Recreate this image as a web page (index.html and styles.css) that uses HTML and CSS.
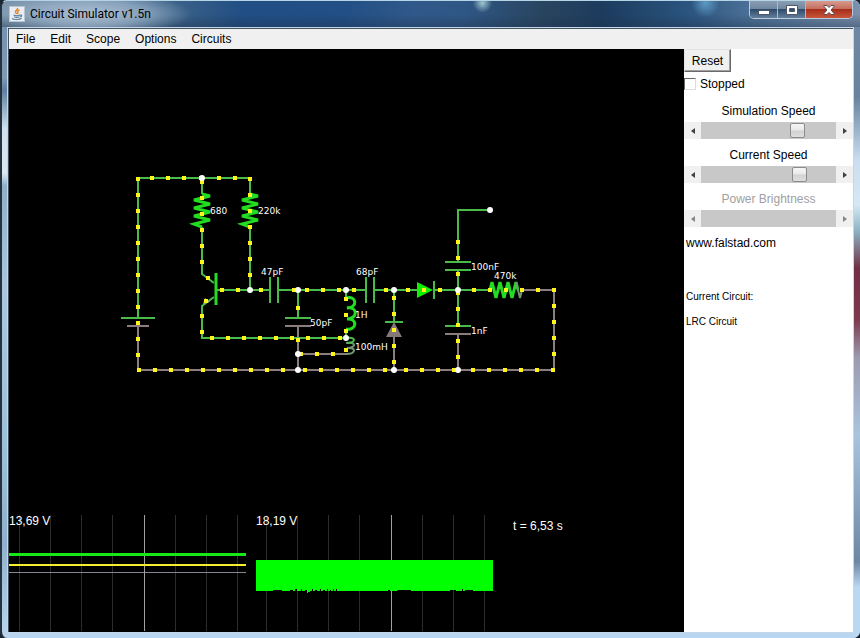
FILE: index.html
```html
<!DOCTYPE html>
<html lang="en">
<head>
<meta charset="utf-8">
<title>Circuit Simulator v1.5n</title>
<link rel="stylesheet" href="styles.css">
</head>
<body>
<div class="window">
  <header class="titlebar">
    <svg class="app-icon" viewBox="0 0 16 16" aria-hidden="true">
      <rect x=".5" y=".5" width="15" height="15" fill="#e9edf1" stroke="#b8c4cf"/>
      <path d="M8.500 2c1 1.700-3 2.500-2 4.200.3.700 1 1 1.200 1.800M10.500 4C9 4.600 8 5.400 8.800 6.300c.5.700.2 1.200-.3 1.700" fill="none" stroke="#e0872f" stroke-width="1.400"/>
      <path d="M4.500 9c1.500.700 5 .7 6.500 0M5 10.800c1.500.6 4 .6 5.500 0M3 12.500c2 1.500 7.500 1.300 9.500-.3M11 9.200c2-.6 2.300 1 .2 1.800" fill="none" stroke="#577d9b" stroke-width="1.200"/>
    </svg>
    <h1 class="title">Circuit Simulator v1.5n</h1>
    <div class="controls">
      <button class="control" aria-label="Minimize"><svg width="14" height="12" viewBox="0 0 14 12"><rect x="1.500" y="6.500" width="11" height="4" fill="#fff" stroke="#4c5865"/></svg></button>
      <button class="control" aria-label="Maximize"><svg width="14" height="12" viewBox="0 0 14 12"><path fill="#fff" fill-rule="evenodd" stroke="#4c5865" d="M1.500 1.500h11v9h-11zM4.500 4.500v3h5v-3z"/></svg></button>
      <button class="control close" aria-label="Close"><svg width="14" height="12" viewBox="0 0 14 12"><path d="M2 1.500h3l2 2 2-2h3v1L9 6l3 3.500v1H9l-2-2-2 2H2v-1L5 6 2 2.500z" fill="#fff" stroke="#5d4a50"/></svg></button>
    </div>
  </header>
  <div class="client">
    <nav class="menubar">
      <button>File</button><button>Edit</button><button>Scope</button><button>Options</button><button>Circuits</button>
    </nav>
    <div class="workspace">
      <main class="canvas">
        <svg class="schematic" viewBox="9 49 675 582" preserveAspectRatio="xMinYMin meet" role="img" aria-label="Circuit and scopes">
          <g class="wire gray">
            <path d="M138 326V370H554V290H522M127 326H149M298 326V370M285 326H311M298 354H346M394 337V370M458 334V370M445 334H471"/>
          </g>
          <g class="wire green">
            <path d="M121 318H155M138 318V178H250V194M202 178V194M202 227V274L214 283M214 297L202 306V338H346M250 227V290M217 290H270M278 290H366M374 290H417M434 290H490M298 290V318M285 318H311M270 277V303M278 277V303M366 277V303M374 277V303M346 290V298M346 330V338M394 290V322M385 322H403M490 210H458V262M445 262H471M445 270H471M458 270V326M445 326H471M434 281V299"/>
          </g>
          <g class="bright">
            <path d="M202 194L210 196L194 200L210 204L194 208L210 212L194 216L210 220L194 224L202 227"/>
            <path d="M250 194L258 196L242 200L258 204L242 208L258 212L242 216L258 220L242 224L250 227"/>
            <path d="M490 290L492 282L496 298L500 282L504 298L508 282L512 298L516 282L518 290"/>
            <path d="M216 273V305"/>
            <path d="M346 298C357 295 358 308 347 308C358 306 358 319 347 319C358 318 357 331 346 329"/>
          </g>
          <path class="tail" d="M516 282L520 298L522 290M346 343C356 341 357 348 347 348C357 347 356 354 346 354"/>
          <path class="wire green" d="M346 338C356 336 357 343 347 343"/>
          <path d="M417 282V298L433 290Z" fill="#0ff000"/>
          <path d="M394 322L386 337H402Z" fill="#857878"/>
          <path d="M203 304L205 298L210 302Z" fill="#b5a47c"/>
          <g class="current">
            <path d="M138 177V360M137 370H300M303 370H388M404 370H456M471 370H555M554 288V358"/>
            <path d="M150 178H187M199 178H202M217 178H238M202 180V265M250 177V278"/>
            <path d="M220 290H240M259 290H263M292 290H296M305 290H342M352 290H356M384 290H388M406 290H442M472 290H556"/>
            <path d="M206 278H210M204 301H208M202 314V335M210 338H343M298 306V310M298 338V342M299 354H336M344 350H348M346 297V334"/>
            <path d="M394 296V365M458 240V277M458 291V360"/>
          </g>
          <g fill="#fff">
            <circle cx="202" cy="178" r="3"/><circle cx="250" cy="290" r="3"/><circle cx="298" cy="290" r="3"/><circle cx="346" cy="290" r="3"/><circle cx="394" cy="290" r="3"/><circle cx="458" cy="290" r="3"/><circle cx="490" cy="210" r="3"/><circle cx="346" cy="338" r="3"/><circle cx="298" cy="354" r="3"/><circle cx="298" cy="370" r="3"/><circle cx="394" cy="370" r="3"/><circle cx="458" cy="370" r="3"/>
          </g>
          <g class="value">
            <text x="210" y="214">680</text><text x="258" y="214">220k</text><text x="261" y="275">47pF</text><text x="356" y="275">68pF</text><text x="310" y="326">50pF</text><text x="355" y="318">1H</text><text x="355" y="350">100mH</text><text x="471" y="270">100nF</text><text x="494" y="279">470k</text><text x="471" y="334">1nF</text>
          </g>
          <g class="scope">
            <path class="grid" d="M19.500 515V631M50.500 515V631M81.500 515V631M112.500 515V631M175.500 515V631M206.500 515V631M237.500 515V631M266.500 515V631M297.500 515V631M328.500 515V631M359.500 515V631M422.500 515V631M453.500 515V631M484.500 515V631"/>
            <path d="M9 572.500H246" stroke="#85858f"/>
            <path d="M144.500 515V631M391.500 515V631" stroke="#a0a0a0"/>
            <path d="M9 554.500H246" stroke="#17e817" stroke-width="3"/>
            <path d="M9 565H246" stroke="#f4ee2c" stroke-width="2"/>
            <path fill="#0f0" d="M256 560H493V591H473V590H465V591H463V589H462V591H456V590H450V591H411V590H397V591H390V590H388V591H337V589H336V591H334V589H333V591H331V590H330V591H328V589H327V591H325V590H323V591H321V589H320V591H317V590H315V591H313V589H312V591H310V592H308V593H307V590H305V591H302V589H301V591H297V589H295V591H293V590H290V591H282V590H273V591H256Z"/>
            <text x="9" y="525">13,69 V</text><text x="256" y="525">18,19 V</text><text x="513" y="530">t = 6,53 s</text>
          </g>
        </svg>
      </main>
      <aside class="panel">
        <button class="reset">Reset</button>
        <label class="stopped"><input type="checkbox">Stopped</label>
        <div class="setting">
          <label for="sim">Simulation Speed</label>
          <div class="scrollbar"><button class="arrow" aria-label="Slower simulation"></button><input id="sim" type="range" min="0" max="120" value="89"><button class="arrow next" aria-label="Faster simulation"></button></div>
        </div>
        <div class="setting">
          <label for="cur">Current Speed</label>
          <div class="scrollbar"><button class="arrow" aria-label="Slower current"></button><input id="cur" type="range" min="0" max="120" value="91"><button class="arrow next" aria-label="Faster current"></button></div>
        </div>
        <div class="setting disabled">
          <label for="pow">Power Brightness</label>
          <div class="scrollbar"><button class="arrow" aria-label="Less brightness" disabled></button><input id="pow" type="range" disabled><button class="arrow next" aria-label="More brightness" disabled></button></div>
        </div>
        <a class="site" href="#">www.falstad.com</a>
        <div class="circuit"><p>Current Circuit:</p><p>LRC Circuit</p></div>
      </aside>
    </div>
  </div>
</div>
</body>
</html>
```
FILE: styles.css
```css
* { box-sizing: border-box; }
body {
  margin: 0;
  background: #1a2430;
  font: 12px "Liberation Sans", Arial, sans-serif;
  color: #000;
}
button { font: inherit; color: inherit; }

.window {
  display: flex;
  flex-direction: column;
  min-height: 100vh;
  padding: 0 7px 6px 6px;
  border-top: 1px solid #b5d4e6;
  border-left: 2px solid #26333f;
  border-radius: 7px;
  background:
    linear-gradient(#6f8fae, #8099b5 12%, #5d7f9f 14%, #cfe0ee 20%, #dbe8f2 27%, #8fb0ca 29%, #a9c6de 45%, #9dc0da 70%, #8fb0cc 85%, #b9d5f0) left / 7px 100% no-repeat,
    linear-gradient(#7289a5, #68829f 15%, #c9def0 25%, #d6e8f6 32%, #8db5c5 36%, #702f44 42%, #7c3a4e 50%, #9c9bb0 56%, #a9c4de 68%, #6d86a6 88%, #b9d8f2 92%) right / 7px 100% no-repeat,
    #b9d5f0;
}

.titlebar {
  display: flex;
  align-items: flex-start;
  height: 26px;
  margin: 0 -7px 0 -6px;
  padding: 0 7px;
  border-radius: 6px 6px 0 0;
  background:
    radial-gradient(100px 22px at 90px 13px, rgba(178, 196, 213, .9), rgba(160, 184, 208, .65) 55%, transparent),
    radial-gradient(circle at 56% 8%, #9cc5ce, transparent 2%),
    radial-gradient(circle at 82% 8%, #5b9ac4, transparent 2%),
    linear-gradient(transparent 50%, rgba(30, 50, 75, .4)),
    linear-gradient(90deg, #7b94ab, #718aa2 9%, #3c6288 20%, #214e84 28%, #224f86 40%, #30598a 48%, #2f5785 54%, #29445f 63%, #1c3c5e 70%, #2b547f 80%, #50749a 88%, #7b90ac);
}
.app-icon { width: 16px; height: 16px; margin-top: 5px; }
.title {
  flex: 1;
  margin: 0 0 0 5px;
  font: 12px/26px Roboto, "Open Sans", sans-serif;
}
.controls {
  display: flex;
  height: 18px;
  border: 1px solid #bccbdb;
  border-top: 0;
  border-radius: 0 0 5px 5px;
  overflow: hidden;
}
.control {
  display: grid;
  place-items: center;
  width: 28px;
  padding: 0;
  border: 0;
  border-right: 1px solid #a9b9ca;
  background: linear-gradient(#8a9db2, #7288a1 45%, #304c6c 50%, #647f9c);
}
.close {
  width: 46px;
  border-right: 0;
  background: linear-gradient(#d79b8f, #c56e5f 45%, #a72e1c 50%, #c8563b);
}

.client {
  flex: 1;
  display: flex;
  flex-direction: column;
  border: solid #43535f;
  border-width: 1px 0 0 1px;
  outline: 1px solid #c3d7e8;
  margin-top: 1px;
}
.menubar {
  display: flex;
  gap: 15px;
  height: 20px;
  padding: 0 7px;
  background: #f0f0f0;
}
.menubar button { padding: 0; border: 0; background: none; }

.workspace { flex: 1; display: flex; background: #fff; }
.canvas { flex: 1; min-width: 0; background: #000; }
.schematic { display: block; width: 100%; height: auto; }
.wire { fill: none; stroke-width: 2; }
.green { stroke: #48bb48; }
.gray { stroke: #8b7d7d; }
.bright { fill: none; stroke: #22dd22; stroke-width: 3; }
.tail { fill: none; stroke: #719771; stroke-width: 2; }
.current { fill: none; stroke: #fdf51c; stroke-width: 4; stroke-dasharray: 4 12; }
.value { fill: #fff; font: 9px "DejaVu Sans", sans-serif; }
.scope { fill: none; }
.scope text { fill: #fff; font-size: 12px; }
.grid { stroke: #2c2c2c; }

.panel {
  flex: 0 0 169px;
  display: flex;
  flex-direction: column;
  align-items: flex-start;
}
.reset {
  width: 47px;
  height: 23px;
  padding: 0;
  border: 1px solid;
  border-color: #e4e4e4 #696969 #696969 #e4e4e4;
  background: #f0f0f0;
  box-shadow: inset -1px -1px #a0a0a0;
}
.stopped { display: flex; align-items: center; gap: 4px; height: 24px; }
.stopped input {
  appearance: none;
  width: 12px;
  height: 12px;
  margin: 0;
  border: 1px solid;
  border-color: #696969 #dcdcdc #dcdcdc #696969;
  background: #fff;
}
.stopped input:checked { background: #444; }
.setting { width: 100%; margin: 4px 0 1px; }
.setting label { display: block; line-height: 22px; text-align: center; }
.scrollbar { display: flex; height: 17px; background: #f0f0f0; }
.scrollbar input {
  appearance: none;
  flex: 1;
  min-width: 0;
  height: 17px;
  margin: 0;
  background: #c8c8c8;
}
.scrollbar input::-webkit-slider-thumb {
  appearance: none;
  width: 15px;
  height: 15px;
  border: 1px solid #8c8c8c;
  border-radius: 2px;
  background: linear-gradient(#f6f6f6, #e9e9e9 48%, #d2d2d2 52%, #dedede);
}
.arrow {
  display: grid;
  place-items: center;
  width: 17px;
  padding: 0;
  border: 0;
  background: #f0f0f0;
}
.arrow::before {
  content: "";
  border: solid transparent;
  border-width: 3px 4px 3px 0;
  border-right-color: #404040;
}
.next::before {
  border-width: 3px 0 3px 4px;
  border-left-color: #404040;
}
.disabled { color: #a0a0a0; }
.disabled .arrow { opacity: .6; }
.disabled input::-webkit-slider-thumb { visibility: hidden; }
.site { margin: 4px 2px 0; line-height: 22px; color: inherit; text-decoration: none; }
.circuit { margin: 30px 2px 0; font-size: 10px; line-height: 25px; }
.circuit p { margin: 0; }
```
